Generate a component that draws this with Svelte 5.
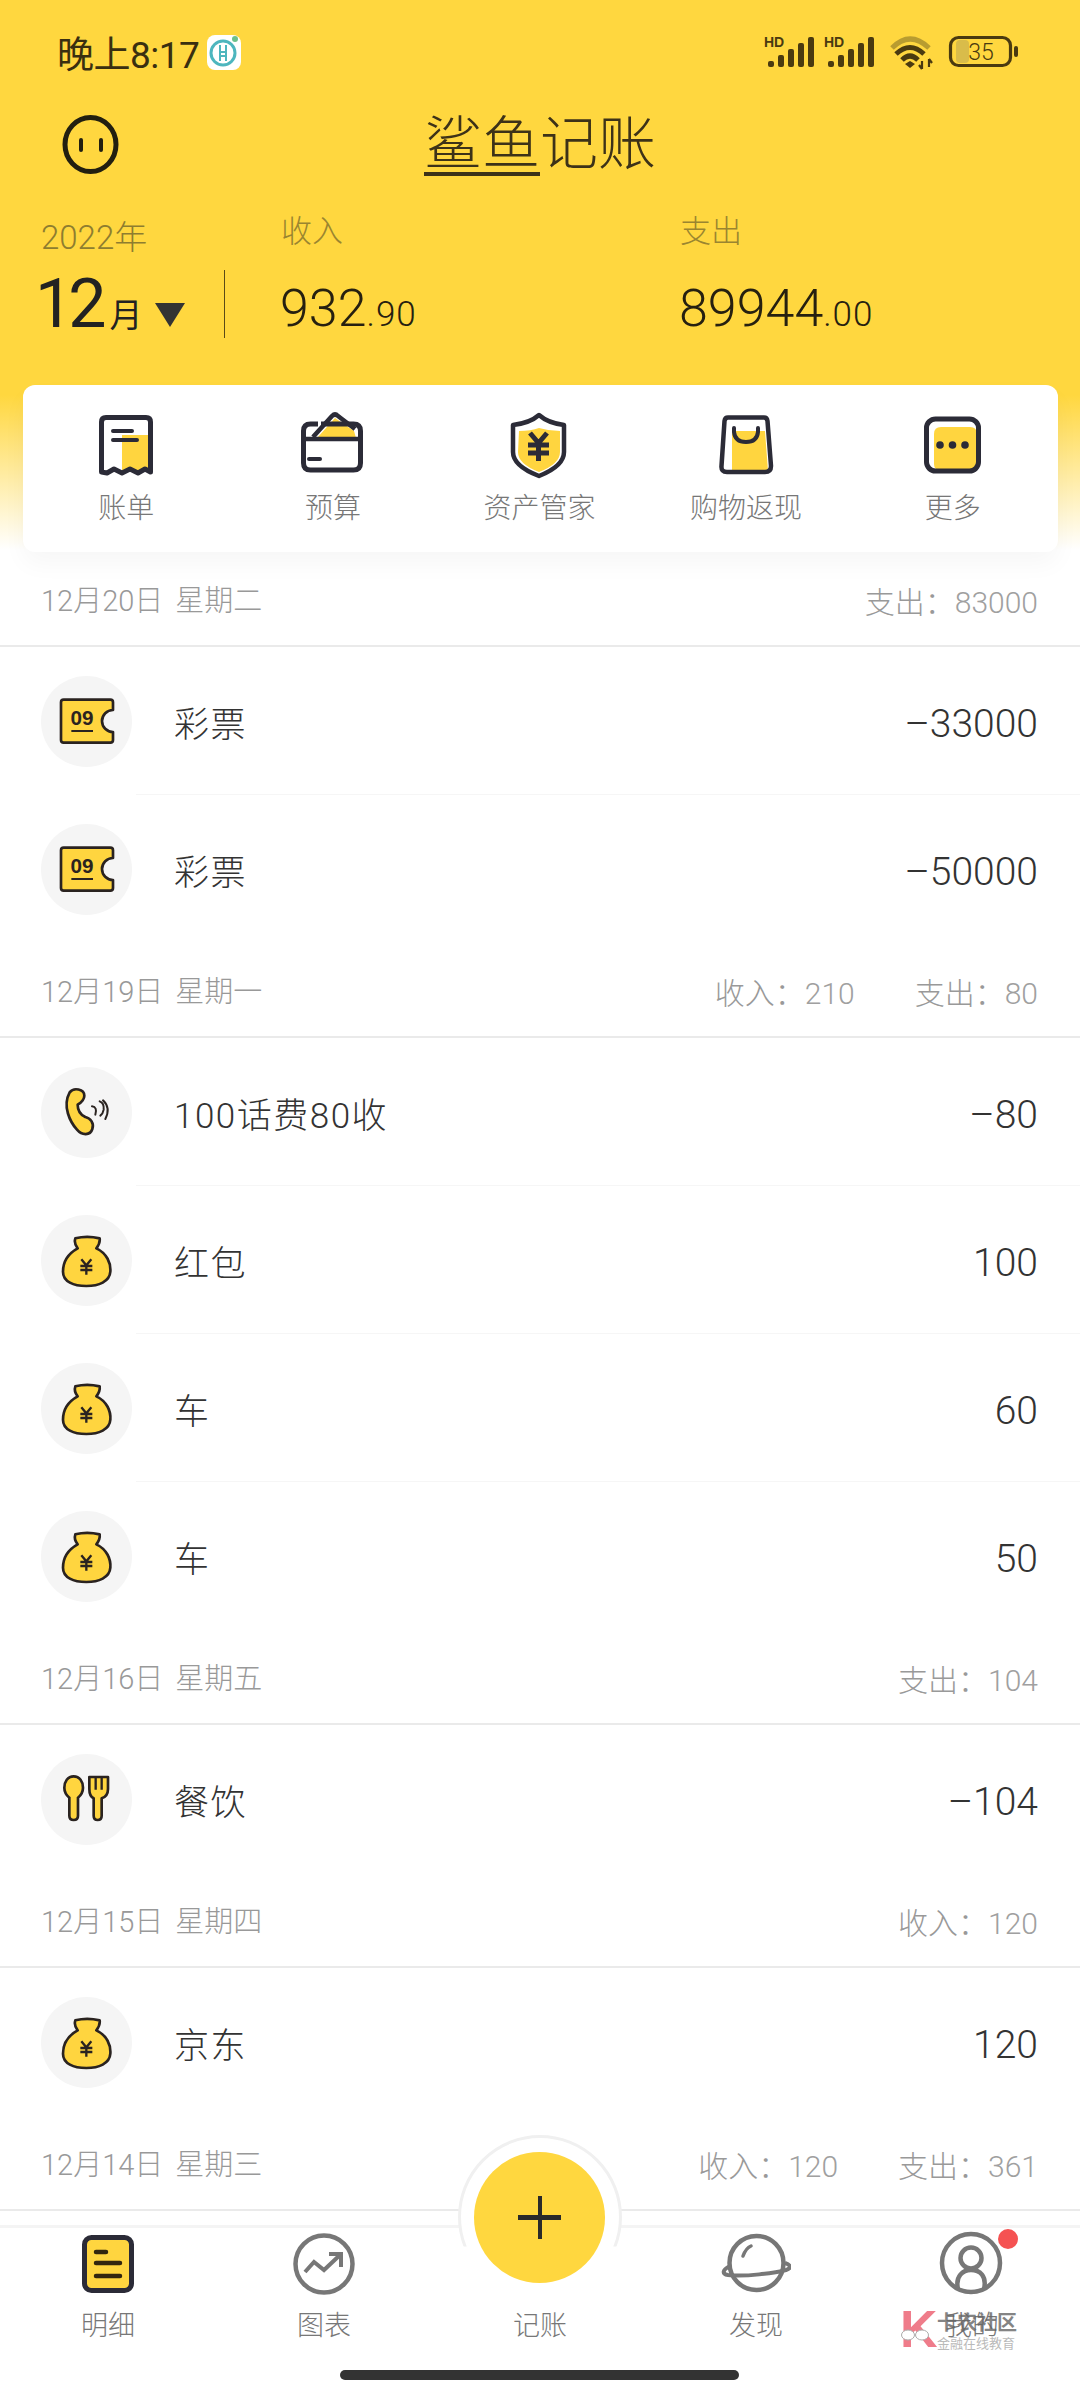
<script>
  const tools = [
    { label: '账单', icon: 'bill' },
    { label: '预算', icon: 'wallet' },
    { label: '资产管家', icon: 'shield' },
    { label: '购物返现', icon: 'bag' },
    { label: '更多', icon: 'more' }
  ];
  const groups = [
    { date: '12月20日', week: '星期二', income: null, expense: '83000', rows: [
      { icon: 'ticket', name: '彩票', amount: '–33000' },
      { icon: 'ticket', name: '彩票', amount: '–50000' }
    ]},
    { date: '12月19日', week: '星期一', income: '210', expense: '80', rows: [
      { icon: 'phone', name: '100话费80收', amount: '–80' },
      { icon: 'money', name: '红包', amount: '100' },
      { icon: 'money', name: '车', amount: '60' },
      { icon: 'money', name: '车', amount: '50' }
    ]},
    { date: '12月16日', week: '星期五', income: null, expense: '104', rows: [
      { icon: 'food', name: '餐饮', amount: '–104' }
    ]},
    { date: '12月15日', week: '星期四', income: '120', expense: null, rows: [
      { icon: 'money', name: '京东', amount: '120' }
    ]},
    { date: '12月14日', week: '星期三', income: '120', expense: '361', rows: [] }
  ];
</script>

{#snippet signal(dx)}
  <g transform="translate({dx} 0)">
    <text x="764" y="48" class="hd">HD</text>
    <rect x="768" y="62" width="6" height="6" rx="2" />
    <rect x="778" y="56" width="6" height="12" rx="2" />
    <rect x="788" y="50" width="6" height="18" rx="2" />
    <rect x="798" y="44" width="6" height="24" rx="2" />
    <rect x="808" y="38" width="6" height="30" rx="2" />
  </g>
{/snippet}

{#snippet toolIcon(name)}
  {#if name === 'bill'}
    <svg width="70" height="70" viewBox="91 410 70 70">
      <path d="M122 435 H151 V471 L146 468 L139 472 L131 468 L124 472 L122 471 Z" fill="#FFD53F" />
      <path d="M101.5 472 V422 Q101.5 417.5 106 417.5 H146 Q150.5 417.5 150.5 422 V472 L145 469 L138 473 L130 469 L122 473 L114 469 L107 473 Z" fill="none" stroke="#2B2B37" stroke-width="5" stroke-linejoin="round" />
      <path d="M113 431 H132 M113 440 H137" stroke="#2B2B37" stroke-width="4" stroke-linecap="round" />
    </svg>
  {:else if name === 'wallet'}
    <svg width="70" height="70" viewBox="298 410 70 70">
      <path d="M317 438 L335 418 L354 431 L356 438 Z" fill="#FFD53F" />
      <path d="M321 424 H353.500 Q360.500 424 360.500 431 V463 Q360.500 470 353.500 470 H310.500 Q303.500 470 303.500 463 V431 Q303.500 424 310.500 424 H318" fill="none" stroke="#2B2B37" stroke-width="5" />
      <path d="M304 439 H360" stroke="#2B2B37" stroke-width="4.500" />
      <path d="M313 437 L332 416 Q335 413 338 416 L355 429" fill="none" stroke="#2B2B37" stroke-width="4.500" stroke-linejoin="round" />
      <path d="M309 459 H320" stroke="#2B2B37" stroke-width="4" stroke-linecap="round" />
    </svg>
  {:else if name === 'shield'}
    <svg width="70" height="70" viewBox="505 410 70 70">
      <path d="M520 431 Q532 431 540 428 Q550 431 561 431 V452 Q561 464 540 472 Q519 464 519 452 Z" fill="#FFD53F" />
      <path d="M540 415 Q549 423 565 425 V452 Q565 466 540 476 Q514 466 514 452 V425 Q531 423 540 415 Z" fill="none" stroke="#2B2B37" stroke-width="4.500" stroke-linejoin="round" />
      <path d="M531 433 L539.500 443 L548 433 M529 445 H550 M529 453 H550 M539.500 443 V461" fill="none" stroke="#2B2B37" stroke-width="5" />
    </svg>
  {:else if name === 'bag'}
    <svg width="70" height="70" viewBox="712 410 70 70">
      <path d="M733 431 H766 L769 471 H733 Z" fill="#FFD53F" />
      <path d="M729 417.500 H765 Q768 417.500 768.500 421 L772 466 Q772 472 766 472 H728 Q722 472 722.500 466 L725.500 421 Q726 417.500 729 417.500 Z" fill="none" stroke="#2B2B37" stroke-width="4.500" />
      <path d="M735 428 V432 Q736 442 747 442 Q758 442 759 432 V428" fill="none" stroke="#2B2B37" stroke-width="4" stroke-linecap="round" />
    </svg>
  {:else}
    <svg width="70" height="70" viewBox="919 410 70 70">
      <path d="M942 427 H971 Q978 427 978 434 V470 H941 Q935 470 935 464 V434 Q935 427 942 427 Z" fill="#FFD53F" />
      <rect x="927.500" y="419" width="52" height="52" rx="9" fill="none" stroke="#2B2B37" stroke-width="5" />
      <circle cx="941" cy="445" r="3.800" fill="#2B2B37" />
      <circle cx="953.500" cy="445" r="3.800" fill="#2B2B37" />
      <circle cx="966" cy="445" r="3.800" fill="#2B2B37" />
    </svg>
  {/if}
{/snippet}

{#snippet rowIcon(name)}
  {#if name === 'ticket'}
    <svg width="70" height="70" viewBox="95 108 210 210">
      <path d="M130 149 H270 Q278 149 278 157 V180 A33 33 0 0 0 278 246 V270 Q278 278 270 278 H130 Q122 278 122 270 V157 Q122 149 130 149 Z" fill="#FFD53F" stroke="#2A2320" stroke-width="8" stroke-linejoin="round" />
      <text x="185" y="226" class="num09">09</text>
      <path d="M153 243 H218" stroke="#2A2320" stroke-width="6" />
    </svg>
  {:else if name === 'phone'}
    <svg width="70" height="70" viewBox="95 82 210 210">
      <path d="M148 128 C160 112 192 118 192 138 C192 150 180 160 172 165 C172 180 180 195 195 202 C210 205 222 220 216 238 C210 258 185 258 170 240 C150 218 125 170 148 128 Z" fill="#FFD53F" stroke="#2A2320" stroke-width="8" stroke-linejoin="round" />
      <path d="M215 170 Q232 172 225 195 M238 155 Q252 160 250 180 Q248 192 240 198 M248 152 Q272 175 255 208" fill="none" stroke="#2A2320" stroke-width="6" stroke-linecap="round" />
    </svg>
  {:else if name === 'money'}
    <svg width="70" height="70" viewBox="95 525 210 210">
      <path d="M165 565 Q200 556 238 565 Q240 580 228 595 C260 610 272 640 270 665 C268 695 235 708 198 708 C160 708 128 695 128 665 C128 635 145 610 172 595 Q160 580 165 565 Z" fill="#FFD53F" stroke="#2A2320" stroke-width="8" stroke-linejoin="round" />
      <path d="M183 628 L198 646 L213 628 M180 648 H216 M180 660 H216 M198 646 V674" fill="none" stroke="#2A2320" stroke-width="7" />
    </svg>
  {:else}
    <svg width="70" height="70" viewBox="95 75 210 210">
      <path d="M160 112 C178 112 188 128 188 146 C188 160 180 170 173 176 V230 Q173 243 160 243 Q147 243 147 230 V176 C140 170 132 160 132 146 C132 128 142 112 160 112 Z" fill="#FFD53F" stroke="#2A2320" stroke-width="8" />
      <path d="M207 114 V150 Q207 172 220 178 V230 Q220 243 232 243 Q244 243 244 230 V178 Q263 172 263 150 V114 H207 Z" fill="#FFD53F" stroke="#2A2320" stroke-width="8" stroke-linejoin="round" />
      <path d="M226 114 V152 M244 114 V152" stroke="#2A2320" stroke-width="7" />
    </svg>
  {/if}
{/snippet}

<div class="page">
  <div class="top">
    <header class="status">
      <div class="status-left">
        <span class="time">晚上8:17</span>
        <svg width="34" height="35" viewBox="208 35 34 35" class="app">
          <rect x="208" y="35" width="34" height="35" rx="8" fill="#fff" />
          <circle cx="224" cy="53" r="12" fill="none" stroke="#4DB6BE" stroke-width="3" />
          <path d="M221 45 V61 M227 45 V61 M220 52 H228 M220 56 H228" stroke="#4DB6BE" stroke-width="2" />
          <circle cx="236" cy="39" r="3" fill="#6CC08B" />
        </svg>
      </div>
      <svg width="260" height="40" viewBox="760 33 260 40" class="sys">
        {@render signal(0)}
        {@render signal(60)}
        <path d="M892 49 Q910 31 929 49" fill="none" stroke="#B89C30" stroke-width="5" />
        <path d="M896 55 Q910 42 924 55 M902 61 Q910 53 918 61" fill="none" stroke="#4A3A10" stroke-width="5" />
        <path d="M905 65 L910 62 L915 65 L910 69 Z" fill="#4A3A10" />
        <path d="M922 62 V70 M919 66 L922 70 M929 60 V68 M929 60 L932 64" fill="none" stroke="#4A3A10" stroke-width="2.200" />
        <rect x="956" y="41" width="13" height="23" rx="4" fill="#D9BC4A" />
        <rect x="950.500" y="38.500" width="60" height="28" rx="8" fill="none" stroke="#4A3A10" stroke-width="3.200" />
        <text x="981" y="61" class="batt">35</text>
        <rect x="1014" y="47" width="4" height="11" rx="2" fill="#4A3A10" />
      </svg>
    </header>

    <div class="title-row">
      <svg width="58" height="60" viewBox="61 113 58 60" class="face">
        <ellipse cx="90.500" cy="143.500" rx="25.500" ry="27" fill="none" stroke="#221F10" stroke-width="5" />
        <path d="M81 139 V149 M101 139 V149" stroke="#221F10" stroke-width="4" stroke-linecap="round" />
      </svg>
      <h1 class="logo"><span class="logo-under">鲨鱼</span>记账</h1>
      <span></span>
    </div>

    <section class="summary">
      <div class="year">2022年</div>
      <div></div>
      <div class="label">收入</div>
      <div class="label">支出</div>
      <div class="month">
        <span class="m-num">12</span><span class="m-unit">月</span><span class="tri"></span>
      </div>
      <div class="divider"></div>
      <div class="value">932<small>.90</small></div>
      <div class="value">89944<small>.00</small></div>
    </section>

    <nav class="card">
      {#each tools as t}
        <div class="tool">
          {@render toolIcon(t.icon)}
          <span>{t.label}</span>
        </div>
      {/each}
    </nav>
  </div>

  <main class="list">
    {#each groups as g}
      <div class="group-head">
        <div class="date">{g.date}<span class="week">{g.week}</span></div>
        <div class="totals">
          {#if g.income}<span>收入：<b>{g.income}</b></span>{/if}
          {#if g.expense}<span>支出：<b>{g.expense}</b></span>{/if}
        </div>
      </div>
      {#each g.rows as r, i}
        <div class="row" class:sep={i < g.rows.length - 1}>
          <div class="circle">{@render rowIcon(r.icon)}</div>
          <div class="name">{r.name}</div>
          <div class="amount">{r.amount}</div>
        </div>
      {/each}
    {/each}
  </main>

  <footer class="tabbar">
    <div class="ring"></div>
    <div class="fab"><span class="plus"></span></div>
    <div class="tabs">
      <div class="tab">
        <svg width="70" height="70" viewBox="73 2229 70 70">
          <rect x="84.500" y="2237.500" width="47" height="53" rx="7" fill="#FFD53F" stroke="#2B2B37" stroke-width="5" />
          <path d="M96 2252 H106 M96 2263 H120 M96 2276 H120" stroke="#33260F" stroke-width="4.500" stroke-linecap="round" />
        </svg>
        <span>明细</span>
      </div>
      <div class="tab">
        <svg width="70" height="70" viewBox="289 2229 70 70">
          <circle cx="324" cy="2264" r="28.500" fill="none" stroke="#777" stroke-width="4.500" />
          <path d="M305 2272 L314 2262 L324 2270 L341 2254 M329 2254 H341 V2267" fill="none" stroke="#777" stroke-width="4" />
        </svg>
        <span>图表</span>
      </div>
      <div class="tab">
        <span class="tab-label-only">记账</span>
      </div>
      <div class="tab">
        <svg width="70" height="70" viewBox="721 2229 70 70">
          <circle cx="756.500" cy="2263" r="27" fill="#fff" stroke="#777" stroke-width="4.500" />
          <path d="M743 2256 Q746 2248 751 2246" fill="none" stroke="#777" stroke-width="3.500" stroke-linecap="round" />
          <path d="M730 2266 C722 2270 722 2274 728 2275 C745 2277 775 2273 786 2270 C792 2268 791 2265 785 2263" fill="none" stroke="#777" stroke-width="4" />
        </svg>
        <span>发现</span>
      </div>
      <div class="tab">
        <svg width="70" height="70" viewBox="937 2229 70 70">
          <circle cx="971" cy="2263" r="29" fill="none" stroke="#777" stroke-width="4.500" />
          <circle cx="971" cy="2258" r="10.500" fill="none" stroke="#777" stroke-width="4.500" />
          <path d="M958 2289 C955 2276 963 2270 971 2270 C980 2270 987 2276 984 2289" fill="none" stroke="#777" stroke-width="4.500" />
        </svg>
        <span>我的</span>
      </div>
    </div>
    <div class="dot"></div>
    <div class="mark">
      <span class="mark-k">K</span>
      <svg class="mark-glasses" width="30" height="12" viewBox="0 0 30 12">
        <ellipse cx="8" cy="6" rx="6.500" ry="5" fill="#fff" stroke="#999" stroke-width="1" />
        <ellipse cx="22" cy="6" rx="6.500" ry="5" fill="#fff" stroke="#999" stroke-width="1" />
      </svg>
      <div class="mark-text"><span>卡农社区</span><small>金融在线教育</small></div>
    </div>
    <div class="home"></div>
  </footer>
</div>

<style>
  :global(body) { margin: 0; background: #fff; }
  .page {
    width: 1080px; height: 2400px; overflow: hidden; display: flex; flex-direction: column;
    font-family: Roboto, "Noto Sans CJK SC", sans-serif; color: #333; background: #fff;
  }
  .top {
    height: 552px; flex: none;
    background: linear-gradient(#FFD73F 0, #FFD73F 395px, #fff 550px);
  }
  .status { height: 104px; display: flex; align-items: center; justify-content: space-between; padding: 0 60px 0 57px; }
  .status-left { display: flex; align-items: center; gap: 8px; }
  .time { font-size: 37px; color: #3A2F10; font-weight: 400; letter-spacing: -0.5px; }
  .hd { font: 700 14px "Liberation Sans", sans-serif; fill: #4A3A10; }
  .sys rect { fill: #4A3A10; }
  .sys rect[fill="#D9BC4A"] { fill: #D9BC4A; }
  .sys rect[fill="none"] { fill: none; }
  .batt { font: 300 23px Roboto, sans-serif; fill: #4A3A10; text-anchor: middle; }
  .title-row { height: 80px; display: grid; grid-template-columns: 1fr auto 1fr; align-items: center; padding-left: 61px; padding-right: 61px; }
  .logo { margin: 0; font-size: 58px; line-height: 62px; font-weight: 300; color: #3D3218; white-space: nowrap; }
  .logo-under { display: inline-block; border-bottom: 4px solid #3D3218; line-height: 56px; }
  .summary {
    display: grid; grid-template-columns: 186px 58px 399px 1fr; grid-template-rows: 86px 78px;
    padding: 0 0 0 38px; box-sizing: border-box; height: 201px;
  }
  .year { font-size: 33px; color: #8E7D2F; font-weight: 300; align-self: end; padding: 0 0 12px 3px; line-height: 40px; }
  .label { font-size: 31px; color: #9A8530; font-weight: 300; align-self: end; padding-bottom: 18px; line-height: 40px; margin-left: -1px; }
  .month { display: flex; align-items: baseline; color: #222; margin-left: -3px; margin-top: -5px; }
  .m-num { font-size: 68px; font-weight: 400; letter-spacing: -5px; line-height: 78px; margin-right: 8px; }
  .m-unit { font-size: 33px; font-weight: 400; }
  .tri { width: 0; height: 0; border-left: 15px solid transparent; border-right: 15px solid transparent; border-top: 24px solid #333; margin-left: 13px; }
  .divider { border-left: 1px solid #5a4a18; height: 68px; align-self: center; margin-top: -10px; }
  .value { font-size: 52px; font-weight: 300; color: #262010; line-height: 78px; margin-left: -2px; }
  .value small { font-size: 35px; letter-spacing: 1px; }
  .card {
    margin: 0 22px 0 23px; height: 167px; background: #fff; border-radius: 12px; box-sizing: border-box;
    display: grid; grid-template-columns: repeat(5, 1fr); padding: 25px 2px 0 0;
    box-shadow: 0 12px 24px rgba(0, 0, 0, .035); position: relative;
  }
  .tool { display: flex; flex-direction: column; align-items: center; }
  .tool span { margin-top: 9px; font-size: 28px; line-height: 40px; color: #777; font-weight: 300; white-space: nowrap; }
  .list { flex: 1; min-height: 0; overflow: hidden; }
  .group-head {
    height: 92px; padding: 0 42px 1px 41px; border-bottom: 2px solid #EAEAEA;
    display: flex; justify-content: space-between; align-items: center; color: #999; font-size: 29px; font-weight: 300;
  }
  .week { margin-left: 12px; }
  .totals { display: flex; gap: 60px; padding-top: 4px; font-size: 30px; }
  .totals b { font-weight: 300; color: #A0A0A0; }
  .row { height: 148px; display: flex; align-items: center; padding: 0 42px 0 41px; position: relative; }
  .row.sep::after { content: ""; position: absolute; left: 136px; right: 0; bottom: 0; height: 1px; background: #F6F6F6; }
  .circle { width: 91px; height: 91px; border-radius: 50%; background: #F5F5F5; display: flex; align-items: center; justify-content: center; flex: none; margin-right: 43px; }
  .circle svg { display: block; }
  .num09 { font: 700 62px "Liberation Sans", sans-serif; fill: #2A2320; text-anchor: middle; }
  .name { font-size: 35px; color: #333; flex: 1; font-weight: 300; letter-spacing: 1.500px; margin-left: -1px; }
  .amount { font-size: 39px; color: #333; font-weight: 300; padding-top: 6px; }
  .tabbar { height: 175px; border-top: 3px solid #F4F4F4; box-sizing: border-box; position: relative; background: #fff; flex: none; }
  .ring { position: absolute; left: 458px; top: -93px; width: 164px; height: 164px; box-sizing: border-box; border: 3px solid #F0F0F0; border-radius: 50%; background: #fff; clip-path: inset(0 0 32% 0); }
  .fab { position: absolute; left: 474px; top: -76px; width: 131px; height: 131px; border-radius: 50%; background: #FFD73F; }
  .plus { position: absolute; left: 44px; top: 44px; width: 43px; height: 43px; background:
    linear-gradient(#2a2a2a, #2a2a2a) center / 43px 5px no-repeat,
    linear-gradient(#2a2a2a, #2a2a2a) center / 4px 43px no-repeat; }
  .tabs { display: grid; grid-template-columns: repeat(5, 216px); padding-top: 1px; }
  .tab { display: flex; flex-direction: column; align-items: center; height: 120px; }
  .tab span { margin-top: 7px; font-size: 27px; line-height: 40px; color: #777; font-weight: 300; }
  .tab span.tab-label-only { margin-top: 77px; }
  .dot { position: absolute; left: 998px; top: 1px; width: 20px; height: 20px; border-radius: 50%; background: #F55252; }
  .mark { position: absolute; left: 900px; top: 82px; display: flex; align-items: flex-start; gap: 3px; opacity: .8; pointer-events: none; }
  .mark-k { font: 700 52px/38px "Liberation Sans", sans-serif; color: #EC5C6E; width: 34px; }
  .mark-glasses { position: absolute; left: 0; top: 19px; }
  .mark-text { display: flex; flex-direction: column; }
  .mark-text span { font-size: 20px; line-height: 26px; color: #666; font-weight: 700; }
  .mark-text small { font-size: 13px; line-height: 16px; color: #AAA; white-space: nowrap; }
  .home { position: absolute; left: 340px; top: 142px; width: 399px; height: 10px; border-radius: 5px; background: #333; }
</style>
